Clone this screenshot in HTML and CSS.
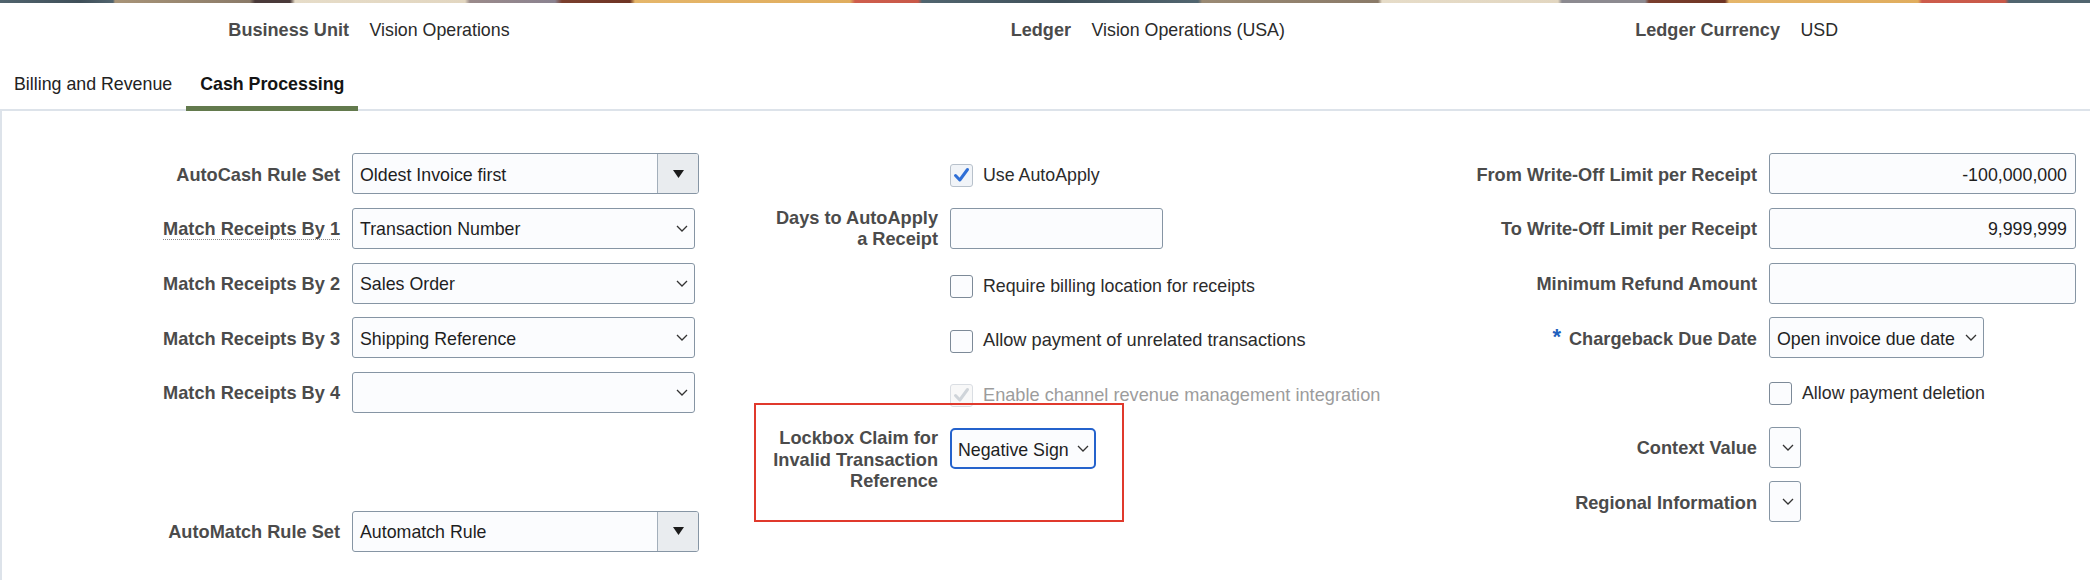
FILE: index.html
```html
<!DOCTYPE html>
<html lang="en">
<head>
<meta charset="utf-8">
<title>Cash Processing</title>
<link rel="stylesheet" href="styles.css">
</head>
<body>
<div class="strip"></div>

<div class="hdr">
  <span class="hl">Business Unit</span><span class="hv">Vision Operations</span>
  <span class="hl">Ledger</span><span class="hv">Vision Operations (USA)</span>
  <span class="hl">Ledger Currency</span><span class="hv">USD</span>
</div>

<div class="tabs">
  <div class="tab">Billing and Revenue</div>
  <div class="tab active">Cash Processing</div>
</div>

<div class="panel">
  <div class="form">
    <!-- column 1 -->
    <div class="col c1">
      <div class="row">
        <span class="lbl">AutoCash Rule Set</span>
        <div class="choice w-cl"><span class="val">Oldest Invoice first</span><span class="btn"><svg width="11" height="8" viewBox="0 0 11 8"><polygon points="0,0 11,0 5.5,8" fill="#1b1b1b"/></svg></span></div>
      </div>
      <div class="row">
        <span class="lbl"><span class="dotted">Match Receipts By 1</span></span>
        <div class="sel w-sel"><span>Transaction Number</span><svg class="chev" width="12" height="7" viewBox="0 0 12 7"><path d="M1 1 L6 6 L11 1" fill="none" stroke="#333" stroke-width="1.3"/></svg></div>
      </div>
      <div class="row">
        <span class="lbl">Match Receipts By 2</span>
        <div class="sel w-sel"><span>Sales Order</span><svg class="chev" width="12" height="7" viewBox="0 0 12 7"><path d="M1 1 L6 6 L11 1" fill="none" stroke="#333" stroke-width="1.3"/></svg></div>
      </div>
      <div class="row">
        <span class="lbl">Match Receipts By 3</span>
        <div class="sel w-sel"><span>Shipping Reference</span><svg class="chev" width="12" height="7" viewBox="0 0 12 7"><path d="M1 1 L6 6 L11 1" fill="none" stroke="#333" stroke-width="1.3"/></svg></div>
      </div>
      <div class="row">
        <span class="lbl">Match Receipts By 4</span>
        <div class="sel w-sel"><span></span><svg class="chev" width="12" height="7" viewBox="0 0 12 7"><path d="M1 1 L6 6 L11 1" fill="none" stroke="#333" stroke-width="1.3"/></svg></div>
      </div>
      <div class="row spaced">
        <span class="lbl">AutoMatch Rule Set</span>
        <div class="choice w-cl"><span class="val">Automatch Rule</span><span class="btn"><svg width="11" height="8" viewBox="0 0 11 8"><polygon points="0,0 11,0 5.5,8" fill="#1b1b1b"/></svg></span></div>
      </div>
    </div>

    <!-- column 2 -->
    <div class="col c2">
      <div class="row">
        <span class="lbl"></span>
        <div class="cbwrap"><span class="box checked"><svg width="21" height="21" viewBox="0 0 21 21"><path d="M4.5 10.5 L8.8 15 L16.5 4.5" fill="none" stroke="#2f6fd6" stroke-width="3" stroke-linecap="round" stroke-linejoin="round"/></svg></span><span>Use AutoApply</span></div>
      </div>
      <div class="row">
        <span class="lbl multi">Days to AutoApply<br>a Receipt</span>
        <div class="inp w-days"></div>
      </div>
      <div class="row">
        <span class="lbl"></span>
        <div class="cbwrap"><span class="box"></span><span>Require billing location for receipts</span></div>
      </div>
      <div class="row">
        <span class="lbl"></span>
        <div class="cbwrap"><span class="box"></span><span class="wide">Allow payment of unrelated transactions</span></div>
      </div>
      <div class="row">
        <span class="lbl"></span>
        <div class="cbwrap disabled"><span class="box checked"><svg width="21" height="21" viewBox="0 0 21 21"><path d="M4.5 10.5 L8.8 15 L16.5 4.5" fill="none" stroke="#cfd4d9" stroke-width="3" stroke-linecap="round" stroke-linejoin="round"/></svg></span><span class="wide">Enable channel revenue management integration</span></div>
      </div>
      <div class="row marked">
        <span class="lbl multi">Lockbox Claim for<br>Invalid Transaction<br>Reference</span>
        <div class="sel focus w-lock"><span>Negative Sign</span><svg class="chev" width="12" height="7" viewBox="0 0 12 7"><path d="M1 1 L6 6 L11 1" fill="none" stroke="#333" stroke-width="1.3"/></svg></div>
        <div class="mark"></div>
      </div>
    </div>

    <!-- column 3 -->
    <div class="col c3">
      <div class="row">
        <span class="lbl">From Write-Off Limit per Receipt</span>
        <div class="inp num w-num">-100,000,000</div>
      </div>
      <div class="row">
        <span class="lbl">To Write-Off Limit per Receipt</span>
        <div class="inp num w-num">9,999,999</div>
      </div>
      <div class="row">
        <span class="lbl">Minimum Refund Amount</span>
        <div class="inp w-num"></div>
      </div>
      <div class="row">
        <span class="lbl"><span class="req">*</span>Chargeback Due Date</span>
        <div class="sel w-cb"><span>Open invoice due date</span><svg class="chev" width="12" height="7" viewBox="0 0 12 7"><path d="M1 1 L6 6 L11 1" fill="none" stroke="#333" stroke-width="1.3"/></svg></div>
      </div>
      <div class="row">
        <span class="lbl"></span>
        <div class="cbwrap"><span class="box"></span><span>Allow payment deletion</span></div>
      </div>
      <div class="row">
        <span class="lbl">Context Value</span>
        <div class="sel w-ctx"><svg class="chev" width="12" height="7" viewBox="0 0 12 7"><path d="M1 1 L6 6 L11 1" fill="none" stroke="#333" stroke-width="1.3"/></svg></div>
      </div>
      <div class="row">
        <span class="lbl">Regional Information</span>
        <div class="sel w-ctx"><svg class="chev" width="12" height="7" viewBox="0 0 12 7"><path d="M1 1 L6 6 L11 1" fill="none" stroke="#333" stroke-width="1.3"/></svg></div>
      </div>
    </div>
  </div>
</div>
</body>
</html>
```

FILE: styles.css
```css
* { box-sizing: border-box; }

html, body {
  margin: 0;
  padding: 0;
  background: #ffffff;
}

body {
  width: 2090px;
  height: 580px;
  overflow: hidden;
  font-family: "Liberation Sans", Arial, Helvetica, sans-serif;
  font-size: 17.8px;
  line-height: 21.4px;
  color: #222222;
}

/* decorative banner strip */
.strip {
  height: 3px;
  background: linear-gradient(to right,
    #51646e 0, #3f4f59 80px, #51646e 113px,
    #a89478 115px, #8a7a68 250px, #4a3a3a 255px, #4a3a3a 290px,
    #e6dcc8 295px, #e2d6c0 465px, #9a8a8a 470px, #8a8290 555px,
    #7a3f2e 562px, #6e3424 630px, #e5b66a 635px, #e0ad5e 850px,
    #cf5e4d 855px, #c85848 918px, #51656f 922px, #3f505a 1060px, #51656f 1198px,
    #9a8a74 1202px, #8a7a68 1378px, #e6dcc8 1382px, #e2d6c0 1558px,
    #8c8a90 1562px, #8c8a90 1645px, #7a3f2e 1649px, #6e3424 1725px,
    #e5b66a 1729px, #e0ad5e 1918px, #cd5c4c 1922px, #c85848 2005px,
    #51656f 2009px, #51656f 2090px);
}

/* header info line */
.hdr {
  display: grid;
  grid-template-columns: 349px 371px 351px 329px 380px 1fr;
  height: 69px;
  padding-top: 17px;
}
.hl {
  font-weight: 700;
  font-size: 18.1px;
  color: #4b4b4b;
  text-align: right;
  white-space: nowrap;
}
.hv {
  padding-left: 20.5px;
  color: #2a2a2a;
  white-space: nowrap;
}

/* tabs */
.tabs {
  display: flex;
  position: relative;
  z-index: 1;
}
.tab {
  padding: 1.5px 14px 11.1px;
  border-bottom: 5px solid transparent;
  color: #222;
  white-space: nowrap;
}
.tab.active {
  font-weight: 700;
  color: #141414;
  border-bottom-color: #637a4d;
}

/* content panel */
.panel {
  margin-top: -2px;
  height: 471px;
  border-top: 2px solid #dde3ea;
  border-left: 2px solid #dde3ea;
}
.form {
  display: grid;
  grid-template-columns: 718px 678px 1fr;
  padding-top: 42.3px;
}

.col {
  display: flex;
  flex-direction: column;
  gap: 13.67px;
}
.c1 { --lw: 338px; }
.c2 { --lw: 218px; }
.c3 { --lw: 359px; }

.row {
  display: grid;
  grid-template-columns: var(--lw) 1fr;
  column-gap: 12px;
  align-items: start;
}
.row.spaced { margin-top: 84.3px; }
.row.marked { position: relative; }

.lbl {
  min-height: 41px;
  padding-top: 3px;
  display: flex;
  align-items: center;
  justify-content: flex-end;
  text-align: right;
  font-weight: 700;
  font-size: 18.2px;
  color: #4b4b4b;
  white-space: nowrap;
}
.lbl.multi { padding-top: 0; }
.dotted {
  text-decoration: underline dotted #8a8a8a;
  text-decoration-thickness: 1px;
  text-underline-offset: 4px;
}
.req {
  color: #2160bd;
  font-size: 22px;
  margin-right: 8px;
  align-self: flex-start;
  margin-top: 6px;
}

/* controls */
.inp, .sel, .choice {
  height: 41px;
  border: 1px solid #8695a4;
  border-radius: 3px;
  background: #fbfcfe;
  color: #1e1e1e;
}
.inp {
  display: flex;
  align-items: center;
  padding: 3px 8px 0;
}
.inp.num { justify-content: flex-end; }

.sel {
  display: flex;
  align-items: center;
  justify-content: space-between;
  padding: 0 6px 0 7px;
  white-space: nowrap;
}
.sel > span { padding-top: 3px; }
.sel.focus {
  border: 2px solid #2462cc;
  border-radius: 5px;
  padding: 0 5px 0 6px;
}
.w-ctx { justify-content: flex-end; padding: 0 6px 0 0; }

.choice {
  display: flex;
  overflow: hidden;
}
.choice .val {
  flex: 1;
  display: flex;
  align-items: center;
  padding: 3px 0 0 7px;
  white-space: nowrap;
}
.choice .btn {
  width: 41px;
  border-left: 1px solid #a3afbb;
  background: #e9ecef;
  display: flex;
  align-items: center;
  justify-content: center;
}

.w-cl { width: 347px; }
.w-sel { width: 343px; }
.w-days { width: 213px; }
.w-num { width: 307px; }
.w-cb { width: 215px; }
.w-ctx { width: 32px; }
.w-lock { width: 146px; }

/* checkboxes */
.cbwrap {
  min-height: 41px;
  padding-top: 3px;
  display: flex;
  align-items: center;
  color: #2b2b2b;
  white-space: nowrap;
}
.cbwrap .wide { font-size: 18.2px; }
.box {
  width: 23px;
  height: 23px;
  margin-right: 10px;
  border: 1px solid #7d8a98;
  border-radius: 3px;
  background: #fbfcfe;
  display: flex;
  align-items: center;
  justify-content: center;
  flex: none;
}
.box.checked {
  border-color: #b8c1cb;
  background: #f1f4f8;
}
.cbwrap.disabled { color: #9c9c9c; }
.cbwrap.disabled .box {
  border-color: #dadee3;
  background: #f8f8f8;
}

/* red annotation frame */
.mark {
  position: absolute;
  left: 34px;
  top: -25px;
  width: 370px;
  height: 119px;
  border: 2.5px solid #e0392c;
  pointer-events: none;
}
```
